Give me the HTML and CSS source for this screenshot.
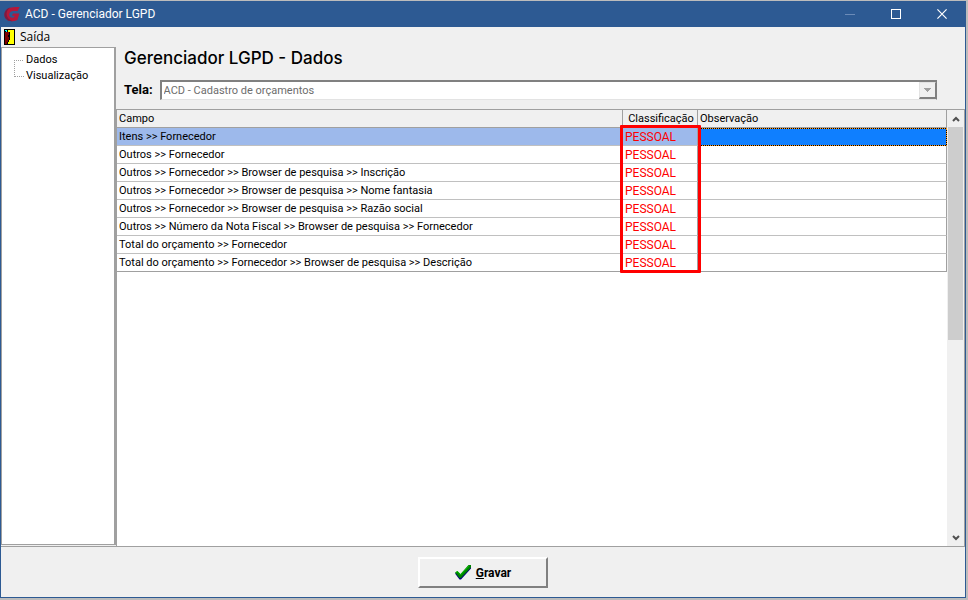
FILE: index.html
```
<!DOCTYPE html>
<html lang="pt-BR">
  <head>
    <meta charset="UTF-8" />
    <meta name="viewport" content="width=device-width, initial-scale=1.0" />
    <title>ACD - Gerenciador LGPD</title>
    <link rel="stylesheet" href="styles.css">
  </head>
  <body>
    <div class="janela">
      <header class="titulo">
        <svg class="logo" viewBox="0 0 16 16">
          <path d="M15.6 1 L13.6 5 L9.4 5 C7 5 5.4 6.4 5.2 8.4 C5.2 10.6 6.6 12 9 11.6 L10.2 11.2 L10.6 9.8 L8 9.8 L9 7.4 L15.4 7.4 L13.4 14 C10 15.6 5.6 15.8 3 13.8 C0 11.4 -0.2 7 2.2 4 C4.6 1.2 9 0.6 15.6 1 Z" fill="#b5173a" />
          <path d="M3.4 2.8 C-0.6 5.8 -0.6 11.6 3 13.8 C4.4 15 6.6 15.4 8.6 15.2 C4.6 13.8 2.4 11 2.6 7.6 C2.8 5 4.2 3 6.4 1.6 C5.2 1.8 4.2 2.2 3.4 2.8 Z" fill="#7c1b42" />
        </svg>
        <span class="nome">ACD - Gerenciador LGPD</span>
        <button class="controle" aria-label="Minimizar">
          <svg viewBox="0 0 10 10" shape-rendering="crispEdges"><path d="M0 5h10v1H0z" fill="#6b8bb8" /></svg>
        </button>
        <button class="controle" aria-label="Maximizar">
          <svg viewBox="0 0 10 10" shape-rendering="crispEdges"><path d="M0 0h10v10H0zM1 1v8h8V1z" fill="#fff" fill-rule="evenodd" /></svg>
        </button>
        <button class="controle" aria-label="Fechar">
          <svg viewBox="0 0 10 10"><path d="M0.4 0.4 9.6 9.6M9.6 0.4 0.4 9.6" stroke="#fff" stroke-width="1.2" /></svg>
        </button>
      </header>

      <nav class="menu">
        <button class="saida">
          <svg class="porta" viewBox="0 0 11 16" shape-rendering="crispEdges">
            <path d="M0 0h11v16H0z" fill="#000" />
            <path d="M4 1h6v14H4z" fill="#ff0" />
            <path d="M1 3h4v10H3v2H1z" fill="#800000" />
            <path d="M5 3h1v8H5zM4 11h1v2H4zM3 13h1v2H3z" fill="#000" />
            <path d="M1 1h2v1H1zM2 2h1v1H2z" fill="#0ff" />
            <path d="M4 6h1v2H4z" fill="#000" />
          </svg>
          Saída
        </button>
      </nav>

      <main>
        <aside>
          <ul class="arvore">
            <li>Dados</li>
            <li>Visualização</li>
          </ul>
        </aside>

        <section>
          <h1>Gerenciador LGPD - Dados</h1>
          <div class="tela">
            <label for="tela">Tela:</label>
            <div class="combo">
              <select id="tela" disabled>
                <option>ACD - Cadastro de orçamentos</option>
              </select>
              <span class="seta">
                <svg viewBox="0 0 8 4" shape-rendering="crispEdges"><path d="M0 0h7v1H0zM1 1h5v1H1zM2 2h3v1H2zM3 3h1v1H3z" fill="#a0a0a0" /></svg>
              </span>
            </div>
          </div>

          <div class="grade">
            <div class="dados">
              <table>
                <thead>
                  <tr>
                    <th>Campo</th>
                    <th class="classificacao">Classificação</th>
                    <th class="observacao">Observação</th>
                  </tr>
                </thead>
                <tbody>
                  <tr class="valgt"><td>Itens &gt;&gt; Fornecedor</td><td>PESSOAL</td><td></td></tr>
                  <tr><td>Outros &gt;&gt; Fornecedor</td><td>PESSOAL</td><td></td></tr>
                  <tr><td>Outros &gt;&gt; Fornecedor &gt;&gt; Browser de pesquisa &gt;&gt; Inscrição</td><td>PESSOAL</td><td></td></tr>
                  <tr><td>Outros &gt;&gt; Fornecedor &gt;&gt; Browser de pesquisa &gt;&gt; Nome fantasia</td><td>PESSOAL</td><td></td></tr>
                  <tr><td>Outros &gt;&gt; Fornecedor &gt;&gt; Browser de pesquisa &gt;&gt; Razão social</td><td>PESSOAL</td><td></td></tr>
                  <tr><td>Outros &gt;&gt; Número da Nota Fiscal &gt;&gt; Browser de pesquisa &gt;&gt; Fornecedor</td><td>PESSOAL</td><td></td></tr>
                  <tr><td>Total do orçamento &gt;&gt; Fornecedor</td><td>PESSOAL</td><td></td></tr>
                  <tr><td>Total do orçamento &gt;&gt; Fornecedor &gt;&gt; Browser de pesquisa &gt;&gt; Descrição</td><td>PESSOAL</td><td></td></tr>
                </tbody>
              </table>
              <div class="destaque"></div>
            </div>
            <div class="rolagem">
              <button aria-label="Subir">
                <svg viewBox="0 0 8 6"><path d="M1 5 4 2 7 5" fill="none" stroke="#505050" stroke-width="2" /></svg>
              </button>
              <div class="trilho"><div class="marcador"></div></div>
              <button aria-label="Descer">
                <svg viewBox="0 0 8 6"><path d="M1 1 4 4 7 1" fill="none" stroke="#505050" stroke-width="2" /></svg>
              </button>
            </div>
          </div>
        </section>
      </main>

      <footer>
        <button class="gravar">
          <svg viewBox="0 0 16 15">
            <path d="M0 8.5 3 7 5.5 10 13.5 1 16 1 16 3.5 6 14.5 4.5 14.5Z" fill="#000080" />
            <path d="M0 7.5 2.5 6 5.5 9 13.5 0 16 0 16 2.5 6 13 4.5 13Z" fill="#008000" />
            <path d="M1 7.5 2.5 6.5 5.5 10 14 0.8" fill="none" stroke="#00c800" />
          </svg>
          <span><u>G</u>ravar</span>
        </button>
      </footer>
    </div>
  </body>
</html>
```
FILE: styles.css
```
* {
  box-sizing: border-box;
}

body {
  margin: 0;
  padding: 1px 2px 2px 0;
  height: 100vh;
  background-color: #bcbcbc;
  font-family: Roboto, "Liberation Sans", sans-serif;
  font-size: 11px;
  line-height: 16px;
  color: #000;
}

button {
  font: inherit;
  color: inherit;
  border: none;
  background: none;
  padding: 0;
}

.janela {
  height: 100%;
  display: flex;
  flex-direction: column;
  border: 1px solid #2d5a93;
  border-top: none;
  background-color: #f0f0f0;
}

.titulo {
  display: flex;
  align-items: center;
  height: 26px;
  padding-left: 3px;
  background-color: #2d5a93;
  color: #fff;
  font-size: 12px;
}

.logo {
  width: 16px;
  height: 16px;
}

.nome {
  flex: 1;
  padding-left: 5px;
}

.controle {
  display: flex;
  align-items: center;
  justify-content: center;
  width: 46px;
  height: 26px;
}

.controle svg {
  width: 10px;
  height: 10px;
}

.menu {
  height: 20px;
  padding: 1px 0 0 3px;
  font-family: "Open Sans", sans-serif;
}

.saida {
  display: flex;
  align-items: center;
  gap: 5px;
  height: 18px;
  font-size: 12px;
}

.porta {
  width: 11px;
  height: 16px;
}

main {
  flex: 1;
  display: flex;
  min-height: 0;
  border-bottom: 1px solid #a0a0a0;
}

aside {
  width: 115px;
  margin-bottom: 1px;
  padding: 4px 0 0 12px;
  background-color: #fff;
  border: 1px solid #a0a0a0;
  border-right-width: 2px;
}

.arvore {
  list-style: none;
  margin: 0;
  padding: 0;
}

.arvore li {
  position: relative;
  padding-left: 12px;
}

/* linhas pontilhadas da árvore */
.arvore li::before {
  content: "";
  position: absolute;
  left: 0;
  top: -8px;
  width: 9px;
  height: 16px;
  border-left: 1px dotted #a0a0a0;
  border-bottom: 1px dotted #a0a0a0;
}

.arvore li:first-child::before {
  top: 7px;
  height: 1px;
  border-left: none;
}

section {
  flex: 1;
  display: flex;
  flex-direction: column;
  min-width: 0;
}

h1 {
  margin: 0;
  padding: 0 8px;
  font-family: Inter, sans-serif;
  font-size: 17px;
  font-weight: 500;
  line-height: 22px;
}

.tela {
  display: flex;
  align-items: center;
  gap: 7px;
  padding: 11px 28px 9px 8px;
}

.tela label {
  font-size: 13px;
  font-weight: bold;
}

.combo {
  flex: 1;
  display: flex;
  height: 20px;
  background-color: #fff;
  border: 2px solid #808080;
  border-right-width: 1px;
  border-bottom: 1px solid #e3e3e3;
}

.combo select {
  flex: 1;
  appearance: none;
  border: none;
  padding: 1px 2px 0;
  background: none;
  font: inherit;
  color: #6d6d6d;
  opacity: 1;
}

.seta {
  display: flex;
  align-items: center;
  justify-content: center;
  width: 17px;
  background-color: #f0f0f0;
  border: 1px solid #e3e3e3;
  border-right-color: #808080;
  border-bottom: 2px solid #808080;
}

.seta svg {
  width: 8px;
  height: 4px;
}

.grade {
  flex: 1;
  display: flex;
  min-height: 0;
  background-color: #fff;
  border: 1px solid #a0a0a0;
  border-bottom: none;
}

.dados {
  flex: 1;
  position: relative;
}

table {
  width: 100%;
  table-layout: fixed;
  border-spacing: 0;
}

th,
td {
  height: 18px;
  padding: 1px 2px 0;
  border-right: 1px solid #a0a0a0;
  border-bottom: 1px solid #c0c0c0;
  text-align: left;
  font-weight: normal;
  white-space: nowrap;
}

th {
  background-color: #f0f0f0;
  border-bottom-color: #a0a0a0;
}

.classificacao {
  width: 75px;
  padding-left: 4px;
  text-align: center;
}

.observacao {
  width: 249px;
}

td:nth-child(2) {
  padding-top: 0;
  color: #f00;
  font-size: 12px;
}

tbody tr:last-child td {
  border-bottom-color: #a0a0a0;
}

.valgt td {
  background-color: #9db9eb;
}

.valgt td:last-child {
  background: linear-gradient(#0f7fff, #0f7fff) padding-box, #000;
  border: 1px dotted #ff9a1f;
}

/* moldura em volta da coluna de classificação */
.destaque {
  position: absolute;
  top: 15px;
  right: 246px;
  width: 81px;
  height: 148px;
  border: 3px solid #f00;
  border-radius: 1px;
}

.rolagem {
  display: flex;
  flex-direction: column;
  width: 17px;
  padding: 0 1px;
  background-color: #f0f0f0;
}

.rolagem button {
  display: flex;
  align-items: center;
  justify-content: center;
  height: 17px;
}

.rolagem svg {
  width: 8px;
  height: 6px;
}

.trilho {
  flex: 1;
}

.marcador {
  height: 53%;
  background-color: #cdcdcd;
}

footer {
  display: flex;
  justify-content: center;
  padding: 10px 0 9px;
}

.gravar {
  display: flex;
  align-items: center;
  justify-content: center;
  gap: 5px;
  width: 130px;
  height: 31px;
  border: 2px solid;
  border-color: #fff #808080 #808080 #fff;
  font-size: 12px;
  font-weight: bold;
}

.gravar svg {
  width: 16px;
  height: 15px;
}
```
